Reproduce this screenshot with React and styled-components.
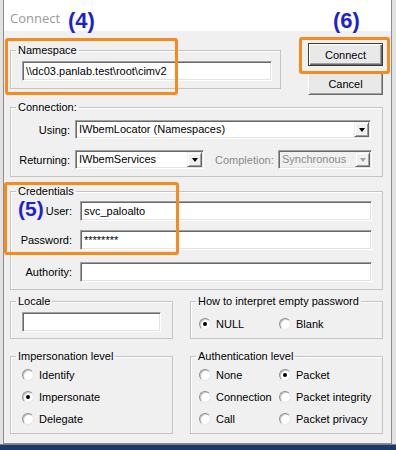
import styled, { createGlobalStyle } from "styled-components";

const GlobalStyle = createGlobalStyle`
  html, body {
    margin: 0;
    padding: 0;
  }
  body {
    width: 396px;
    height: 450px;
    overflow: hidden;
    background: #e2e2e2;
    font-family: "Liberation Sans", Arial, sans-serif;
    font-size: 11px;
    color: #000;
  }
`;

const Page = styled.div`
  position: relative;
  width: 396px;
  height: 450px;
  display: flex;
  flex-direction: column;
`;

const Window = styled.div`
  margin-left: 3px;
  width: 389px;
  height: 444px;
  box-sizing: border-box;
  border: 1px solid #8c8c8c;
  border-top: none;
  background: #f0f0f0;
  display: flex;
  flex-direction: column;
`;

const Taskbar = styled.div`
  flex: 1;
  background: #1d3a66;
  border-top: 1px solid #6f7f99;
`;

const TitleBar = styled.div`
  height: 31px;
  flex-shrink: 0;
  background: #fff;
  display: flex;
  align-items: center;
  padding: 4px 0 0 6px;
  box-sizing: border-box;
  font-family: "Open Sans", "Liberation Sans", sans-serif;
  font-size: 13px;
  color: #9a9a9a;
`;

const Body = styled.div`
  padding: 12px 8px 0 6px;
  display: flex;
  flex-direction: column;
`;

const TopRow = styled.div`
  display: flex;
  align-items: flex-start;
`;

const Group = styled.fieldset`
  margin: ${({ $mt }) => $mt || 0}px 0 0;
  padding: 0;
  border: 1px solid #c4c4c4;
  box-shadow: 1px 1px 0 #fff inset;
  min-width: 0;
  box-sizing: border-box;
  width: ${({ $w }) => ($w ? `${$w}px` : "auto")};
`;

const Legend = styled.legend`
  margin-left: 5px;
  padding: 0 2px;
  font-size: 11px;
  line-height: 13px;
`;

const GroupBody = styled.div`
  padding: ${({ $pad }) => $pad};
`;

const Edit = styled.div`
  height: 20px;
  box-sizing: border-box;
  width: ${({ $w }) => ($w ? `${$w}px` : "auto")};
  flex: ${({ $w }) => ($w ? "none" : "1")};
  background: #fff;
  border: 1px solid;
  border-color: #a0a0a0 #fff #fff #a0a0a0;
  box-shadow: inset 1px 1px 0 #696969, inset -1px -1px 0 #e3e3e3;
  padding: 2px 3px 0;
  font-size: 11px;
  line-height: 14px;
  white-space: nowrap;
  overflow: hidden;
`;

const Combo = styled.div`
  height: 19px;
  width: ${({ $w }) => $w}px;
  margin-left: ${({ $push }) => ($push ? "auto" : "0")};
  box-sizing: border-box;
  display: flex;
  background: ${({ $disabled }) => ($disabled ? "#f0f0f0" : "#fff")};
  border: 1px solid;
  border-color: #a0a0a0 #fff #fff #a0a0a0;
  box-shadow: inset 1px 1px 0 #696969, inset -1px -1px 0 #e3e3e3;
  padding: 1px;
`;

const ComboText = styled.span`
  flex: 1;
  padding-left: 2px;
  font-size: 11px;
  line-height: 15px;
  white-space: nowrap;
  overflow: hidden;
  color: ${({ $disabled }) => ($disabled ? "#8a8a8a" : "#000")};
`;

const ComboButton = styled.span`
  width: 15px;
  box-sizing: border-box;
  background: #f0f0f0;
  border: 1px solid;
  border-color: #f0f0f0 #696969 #696969 #f0f0f0;
  box-shadow: inset 1px 1px 0 #fff, inset -1px -1px 0 #a0a0a0;
  display: flex;
  align-items: center;
  justify-content: center;
`;

const Arrow = styled.span`
  width: 0;
  height: 0;
  border-left: 3.5px solid transparent;
  border-right: 3.5px solid transparent;
  border-top: 4px solid ${({ $disabled }) => ($disabled ? "#a0a0a0" : "#000")};
`;

const FieldRow = styled.div`
  display: flex;
  align-items: center;
  margin-top: ${({ $mt }) => $mt || 0}px;
`;

const FieldLabel = styled.span`
  width: ${({ $w }) => $w}px;
  margin-right: ${({ $gap }) => $gap}px;
  flex-shrink: 0;
  text-align: right;
  white-space: nowrap;
`;

const InlineLabel = styled.span`
  margin-left: 11px;
  white-space: nowrap;
  color: #8a8a8a;
`;

const ButtonColumn = styled.div`
  margin-left: auto;
  display: flex;
  flex-direction: column;
  gap: 6px;
`;

const Button = styled.button`
  width: 75px;
  height: 23px;
  padding: 0;
  font-family: "Liberation Sans", Arial, sans-serif;
  font-size: 11px;
  color: #000;
  background: #e9e9e9;
  border: 1px solid;
  border-color: ${({ $default }) =>
    $default ? "#3a3a3a" : "#fff #696969 #696969 #fff"};
  box-shadow: ${({ $default }) =>
    $default
      ? "inset 1px 1px 0 #fff, inset -1px -1px 0 #696969, inset -2px -2px 0 #a0a0a0"
      : "inset 1px 1px 0 #e3e3e3, inset -1px -1px 0 #a0a0a0"};
`;

const BottomGrid = styled.div`
  margin-top: 5px;
  display: grid;
  grid-template-columns: 163px 193px;
  column-gap: 17px;
  row-gap: 11px;
`;

const RadioGrid = styled.div`
  display: grid;
  grid-template-columns: ${({ $cols }) => $cols};
  grid-auto-rows: 22px;
`;

const RadioOption = styled.div`
  display: flex;
  align-items: center;
  gap: 5px;
  white-space: nowrap;
`;

const RadioCircle = styled.span`
  width: 12px;
  height: 12px;
  box-sizing: border-box;
  flex-shrink: 0;
  border-radius: 50%;
  background: #fff;
  border: 1px solid;
  border-color: #8f8f8f #e6e6e6 #e6e6e6 #8f8f8f;
  box-shadow: inset 1px 1px 0 #c8c8c8;
  display: flex;
  align-items: center;
  justify-content: center;
`;

const RadioDot = styled.span`
  width: 4px;
  height: 4px;
  border-radius: 50%;
  background: #000;
`;

const Marker = styled.div`
  position: absolute;
  left: ${({ $x }) => $x}px;
  top: ${({ $y }) => $y}px;
  width: ${({ $w }) => $w}px;
  height: ${({ $h }) => $h}px;
  box-sizing: border-box;
  border: 3px solid #f7891f;
  border-radius: 3px;
  pointer-events: none;
`;

const Tag = styled.div`
  position: absolute;
  left: ${({ $x }) => $x}px;
  top: ${({ $y }) => $y}px;
  font-family: "Liberation Sans", Arial, sans-serif;
  font-weight: 700;
  font-size: ${({ $size }) => $size || 22}px;
  line-height: 1;
  color: #1f1fd1;
`;

const Radio = ({ label, checked }) => (
  <RadioOption>
    <RadioCircle>{checked && <RadioDot />}</RadioCircle>
    {label}
  </RadioOption>
);

const ComboBox = ({ value, w, disabled, push }) => (
  <Combo $w={w} $disabled={disabled} $push={push}>
    <ComboText $disabled={disabled}>{value}</ComboText>
    <ComboButton>
      <Arrow $disabled={disabled} />
    </ComboButton>
  </Combo>
);

export default function App() {
  return (
    <>
      <GlobalStyle />
      <Page>
        <Window>
          <TitleBar>Connect</TitleBar>
          <Body>
            <TopRow>
              <Group $w={271} $mt={1}>
                <Legend>Namespace</Legend>
                <GroupBody $pad="4px 8px 7px 11px">
                  <Edit>\\dc03.panlab.test\root\cimv2</Edit>
                </GroupBody>
              </Group>
              <ButtonColumn>
                <Button $default>Connect</Button>
                <Button>Cancel</Button>
              </ButtonColumn>
            </TopRow>

            <Group $mt={6}>
              <Legend>Connection:</Legend>
              <GroupBody $pad="6px 10px 7px 2px">
                <FieldRow>
                  <FieldLabel $w={57} $gap={5}>Using:</FieldLabel>
                  <ComboBox value="IWbemLocator (Namespaces)" w={296} />
                </FieldRow>
                <FieldRow $mt={11}>
                  <FieldLabel $w={57} $gap={5}>Returning:</FieldLabel>
                  <ComboBox value="IWbemServices" w={129} />
                  <InlineLabel>Completion:</InlineLabel>
                  <ComboBox value="Synchronous" w={94} disabled push />
                </FieldRow>
              </GroupBody>
            </Group>

            <Group $mt={8}>
              <Legend>Credentials</Legend>
              <GroupBody $pad="3px 10px 7px 2px">
                <FieldRow>
                  <FieldLabel $w={59} $gap={8}>User:</FieldLabel>
                  <Edit>svc_paloalto</Edit>
                </FieldRow>
                <FieldRow $mt={9}>
                  <FieldLabel $w={59} $gap={8}>Password:</FieldLabel>
                  <Edit>********</Edit>
                </FieldRow>
                <FieldRow $mt={12}>
                  <FieldLabel $w={59} $gap={8}>Authority:</FieldLabel>
                  <Edit />
                </FieldRow>
              </GroupBody>
            </Group>

            <BottomGrid>
              <Group>
                <Legend>Locale</Legend>
                <GroupBody $pad="4px 11px 6px 11px">
                  <Edit $w={139} />
                </GroupBody>
              </Group>
              <Group>
                <Legend>How to interpret empty password</Legend>
                <GroupBody $pad="5px 8px 3px 8px">
                  <RadioGrid $cols="80px 1fr">
                    <Radio label="NULL" checked />
                    <Radio label="Blank" />
                  </RadioGrid>
                </GroupBody>
              </Group>
              <Group>
                <Legend>Impersonation level</Legend>
                <GroupBody $pad="1px 11px 3px 11px">
                  <RadioGrid $cols="1fr">
                    <Radio label="Identify" />
                    <Radio label="Impersonate" checked />
                    <Radio label="Delegate" />
                  </RadioGrid>
                </GroupBody>
              </Group>
              <Group>
                <Legend>Authentication level</Legend>
                <GroupBody $pad="1px 8px 3px 8px">
                  <RadioGrid $cols="80px 1fr">
                    <Radio label="None" />
                    <Radio label="Packet" checked />
                    <Radio label="Connection" />
                    <Radio label="Packet integrity" />
                    <Radio label="Call" />
                    <Radio label="Packet privacy" />
                  </RadioGrid>
                </GroupBody>
              </Group>
            </BottomGrid>
          </Body>
        </Window>
        <Taskbar />

        <Marker $x={5} $y={38} $w={173} $h={57} />
        <Marker $x={299} $y={37} $w={91} $h={37} />
        <Marker $x={4} $y={182} $w={175} $h={73} />
        <Tag $x={68} $y={10}>(4)</Tag>
        <Tag $x={333} $y={10}>(6)</Tag>
        <Tag $x={18} $y={198} $size={21}>(5)</Tag>
      </Page>
    </>
  );
}
